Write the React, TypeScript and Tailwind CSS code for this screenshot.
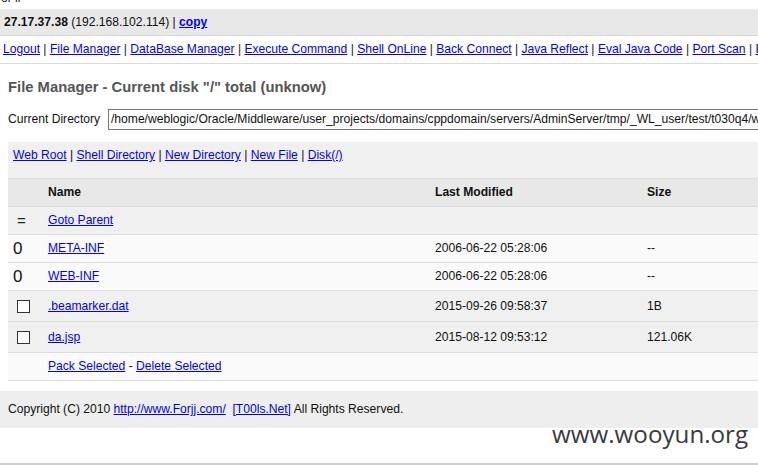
import React from 'react';

const navLinks = [
  'Logout',
  'File Manager',
  'DataBase Manager',
  'Execute Command',
  'Shell OnLine',
  'Back Connect',
  'Java Reflect',
  'Eval Java Code',
  'Port Scan',
  'Download Remote File',
];

const dirLinks = ['Web Root', 'Shell Directory', 'New Directory', 'New File', 'Disk(/)'];

type Row = { kind: 'parent' | 'dir' | 'file'; name: string; modified: string; size: string; bg: string; h: string };

const rows: Row[] = [
  { kind: 'parent', name: 'Goto Parent', modified: '', size: '', bg: 'bg-[#f0f0f0]', h: 'h-[28px]' },
  { kind: 'dir', name: 'META-INF', modified: '2006-06-22 05:28:06', size: '--', bg: 'bg-[#fafafa]', h: 'h-[28px]' },
  { kind: 'dir', name: 'WEB-INF', modified: '2006-06-22 05:28:06', size: '--', bg: 'bg-[#fafafa]', h: 'h-[28px]' },
  { kind: 'file', name: '.beamarker.dat', modified: '2015-09-26 09:58:37', size: '1B', bg: 'bg-[#f0f0f0]', h: 'h-[31px]' },
  { kind: 'file', name: 'da.jsp', modified: '2015-08-12 09:53:12', size: '121.06K', bg: 'bg-[#f0f0f0]', h: 'h-[31px]' },
];

function Link({ children }: { children: React.ReactNode }) {
  return <a href="#" className="text-[#0000ff] underline">{children}</a>;
}

function RowIcon({ kind }: { kind: Row['kind'] }) {
  if (kind === 'parent') return <span className="ml-[9px] text-[15px] leading-none text-[#222]">=</span>;
  if (kind === 'dir') return <span className="ml-[5px] text-[17px] leading-none text-[#111]">0</span>;
  return <span className="ml-[9px] block w-[13px] h-[13px] border border-[#333] bg-white" />;
}

export default function App() {
  return (
    <div className="relative w-[758px] h-[465px] overflow-hidden bg-white text-[12.1px] text-[#111]" style={{ fontFamily: '"Liberation Sans", Arial, sans-serif' }}>
      <div className="w-[1000px]">
        <div className="h-[9px] overflow-hidden">
          <div className="-mt-[9px] pl-[1px] leading-[14px]">or ii</div>
        </div>

        <div className="h-[26px] bg-[#e8e8e8] px-[4px] leading-[26px] whitespace-nowrap">
          <b>27.17.37.38</b> (192.168.102.114) | <a href="#" className="text-[#0000ff] underline font-bold">copy</a>
        </div>
        <div className="h-px bg-[#d6d6d6]" />

        <div className="h-[27px] leading-[26px] px-[3px] whitespace-nowrap">
          {navLinks.map((l, i) => (
            <React.Fragment key={l}>
              {i > 0 && <span className="text-[#222]">{' | '}</span>}
              <Link>{l}</Link>
            </React.Fragment>
          ))}
        </div>
        <div className="h-px bg-[#dcdcdc]" />

        <div className="px-[8px]">
          <h2 className="mt-[15px] text-[14.8px] font-bold text-[#555] leading-[16px] whitespace-nowrap">
            File Manager - Current disk "/" total (unknow)
          </h2>

          <div className="mt-[14px] flex items-center h-[21px]">
            <span className="w-[100px] shrink-0">Current Directory</span>
            <div className="flex-1 h-[21px] border border-[#767676] leading-[19px] pl-[2px] whitespace-nowrap overflow-hidden">
              /home/weblogic/Oracle/Middleware/user_projects/domains/cppdomain/servers/AdminServer/tmp/_WL_user/test/t030q4/war
            </div>
          </div>

          <div className="mt-[12px] bg-[#f0f0f0] h-[37px] pl-[5px] pt-[5px] leading-[16px] border-b border-[#dddddd] whitespace-nowrap">
            {dirLinks.map((l, i) => (
              <React.Fragment key={l}>
                {i > 0 && <span>{' | '}</span>}
                <Link>{l}</Link>
              </React.Fragment>
            ))}
          </div>

          <div className="flex items-center h-[28px] bg-[#e8e8e8] font-bold text-[#111] border-b border-[#dddddd]">
            <div className="w-[40px]" />
            <div className="w-[387px]">Name</div>
            <div className="w-[212px]">Last Modified</div>
            <div>Size</div>
          </div>

          {rows.map((r) => (
            <div key={r.name} className={`flex items-center ${r.h} ${r.bg} border-b border-[#dddddd]`}>
              <div className="w-[40px] flex items-center">
                <RowIcon kind={r.kind} />
              </div>
              <div className="w-[387px]"><Link>{r.name}</Link></div>
              <div className="w-[212px]">{r.modified}</div>
              <div>{r.size}</div>
            </div>
          ))}

          <div className="flex items-center h-[28px] bg-[#fafafa] border-b border-[#dddddd]">
            <div className="w-[40px]" />
            <div>
              <Link>Pack Selected</Link> - <Link>Delete Selected</Link>
            </div>
          </div>
        </div>

        <div className="mt-[10px] h-[37px] bg-[#eeeeee] leading-[37px] px-[8px] whitespace-nowrap">
          Copyright (C) 2010 <Link>http://www.Forjj.com/</Link>&nbsp; <Link>[T00ls.Net]</Link> All Rights Reserved.
        </div>
      </div>

      <div className="absolute left-[552px] top-[418px] text-[24.2px] leading-[32px] text-[#3a3a3a]" style={{ fontFamily: '"Open Sans", sans-serif' }}>
        www.wooyun.org
      </div>
      <div className="absolute left-0 right-0 bottom-0 h-[2px] bg-[#cfcfcf]" />
    </div>
  );
}
